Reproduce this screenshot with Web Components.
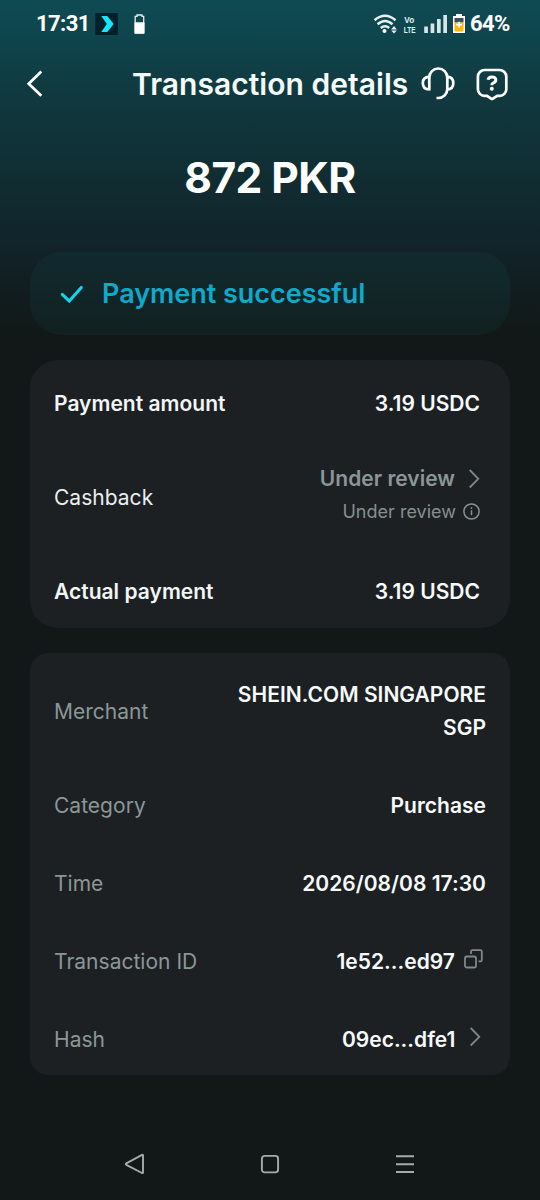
<!DOCTYPE html>
<html lang="en">
<head>
<meta charset="utf-8">
<title>Transaction details</title>
<style>
html,body{margin:0;padding:0;background:#121817}
body{width:540px;height:1200px;overflow:hidden;font-family:Inter,"Liberation Sans",sans-serif}
</style>
</head>
<body>
<payment-screen></payment-screen>
<script>
const define=(name,html)=>{
  const t=document.createElement('template');t.innerHTML=html;
  customElements.define(name,class extends HTMLElement{
    constructor(){super();this.attachShadow({mode:'open'}).append(t.content.cloneNode(true));}
  });
};

define('status-bar',`<style>
:host{display:flex;height:48px;box-sizing:border-box;padding:0 30px 0 36px;align-items:center;font:700 22px/48px Roboto,sans-serif;color:#fff}
svg{display:block;flex:none}
.time{width:59px;letter-spacing:-.6px}
.pct{width:40px;letter-spacing:-.6px;white-space:nowrap}
.sp{flex:1}
</style>
<span class="time">17:31</span>
<svg width="23" height="48" viewBox="95 0 23 48"><rect x="95.300" y="13" width="22.500" height="22" fill="#04202b"/><path d="M101.300 16h5.400q.6 0 1 .6l6 7.400-6 7.400q-.4.600-1 .600h-5.400l5.500-8z" fill="#16e6fb"/></svg>
<svg width="30" height="48" viewBox="118 0 30 48"><path d="M137 16.300v-1.300h5v1.300h1.700v16.500h-8.500V16.300z" fill="none" stroke="#e4f0f0" stroke-width="1.300"/><rect x="134.500" y="22.300" width="10" height="11.400" rx="1" fill="#fff"/></svg>
<span class="sp"></span>
<svg width="96" height="48" viewBox="374 0 96 48">
<g fill="none" stroke="#e6f1f2" stroke-width="2.500"><path d="M374.500 20.200Q385 11.300 395.500 20.200M377.600 24.300Q385 17.600 392.500 24.300M380.800 28Q385 24.500 389.200 28"/></g>
<circle cx="384.500" cy="31" r="2" fill="#fff"/><path d="M394 26l2.800 3.500h-5.600zM394 33.600l2.800-3.100h-5.600z" fill="#e6f1f2"/>
<g font-family="Liberation Sans" font-size="8" font-weight="700" fill="#e6f1f2"><text transform="translate(404.300 22.500) scale(1.050 1.150)" font-size="7.800">Vo</text><text transform="translate(403.700 32.500) scale(.82 1.150)">LTE</text></g>
<g fill="#d6e5e8"><rect x="424.200" y="26.500" width="3.700" height="6.500"/><rect x="430.600" y="23.500" width="3.700" height="9.500"/><rect x="437" y="19" width="3.700" height="14"/><rect x="443.300" y="15" width="3.700" height="18"/></g>
<path d="M456 14h6v2h3v17h-12V16h3z" fill="#fff"/><rect x="454.500" y="18" width="9" height="4.500" fill="#3c4c58"/><rect x="454.500" y="22.500" width="9" height="9" fill="#fdb60c"/><path d="M458.200 21.800h1.700v1.900h2.100v1.700h-2.100v2h-1.700v-2h-2.100v-1.700h2.100z" fill="#fff"/>
</svg>
<span class="pct">64%</span>`);

define('page-header',`<style>
:host{display:flex;height:72px;box-sizing:border-box;padding:0 30px 0 24px;align-items:center;color:#f5fbfb}
svg{display:block;flex:none}
h1{margin:0 0 0 82px;width:284px;font:600 30px/71px Inter,sans-serif;padding-top:1px;white-space:nowrap;letter-spacing:.03px}
</style>
<svg width="26" height="72" viewBox="24 48 26 72"><path d="M41.300 71.500 28.700 83.700l12.600 12" fill="none" stroke="#fff" stroke-width="2.700"/></svg>
<h1><slot></slot></h1>
<svg width="94" height="72" viewBox="416 48 94 72" fill="none" stroke="#fff" stroke-width="2.700">
<path d="M429.300 90.500V77.500a9 9 0 0 1 18 0V89a9 9 0 0 1-9 9h-1.800M429.300 76.700q-6.500.6-6.500 6.300 0 6.500 6.500 6.500M447.300 76.700q6 .6 6 6.300 0 6.200-6 6.600"/>
<path d="M484.500 70h15.200a6.600 6.600 0 0 1 6.600 6.600v12.600a6.600 6.600 0 0 1-6.600 6.600h-2.500l-4.700 3.100q-.5.300-1 0l-4.500-3.100h-2.500a6.600 6.600 0 0 1-6.600-6.600V76.600a6.600 6.600 0 0 1 6.600-6.600z"/>
<path d="M488 79.800q.6-2.900 3.900-2.900c5 0 4.800 4.700 1.500 5.900q-1.600.6-1.600 2.400" stroke-width="3"/><circle cx="491.800" cy="88.800" r="2" fill="#fff" stroke="none"/>
</svg>`);

define('success-banner',`<style>
:host{display:flex;box-sizing:border-box;height:83px;margin:0 30px;padding:1px 30px 0;align-items:center;border-radius:32px;background:linear-gradient(#112a2f,#112628 45%,#12201f);font:600 27px/34px Inter,sans-serif;letter-spacing:-.03px;color:#0ea9cb}
svg{display:block;margin-right:18px;flex:none}span{white-space:nowrap}
</style>
<svg width="24" height="34" viewBox="60 277 24 34"><path d="M62.300 294.300 69.300 301l12-13.600" fill="none" stroke="#13d5ef" stroke-width="3" stroke-linecap="round"/></svg>
<span><slot></slot></span>`);

define('info-card',`<style>
:host{display:flex;flex-direction:column;box-sizing:border-box;margin:0 30px;background:#1c2023;border-radius:var(--radius,28px);padding:var(--pad)}
</style><slot></slot>`);

define('detail-row',`<style>
:host{display:flex;justify-content:space-between;align-items:center;font:400 21px/33px Inter,sans-serif;letter-spacing:.02px;color:#8b9797}
.label{white-space:nowrap}
.value{display:flex;flex-direction:column;align-items:flex-end;text-align:right;font-weight:600;color:#f7fafa;white-space:nowrap}
:host([strong]) .label{font-weight:600;color:#f1f5f5}
:host([bright]) .label{color:#e9eeee;padding-top:4px}
</style><span class="label"><slot name="label"></slot></span><span class="value"><slot></slot></span>`);

define('value-line',`<style>
:host{display:flex;align-items:center;height:33px;color:var(--line-color,inherit);font:var(--line-font,inherit)}
</style><slot></slot>`);

define('chevron-icon',`<style>:host{display:block;margin-left:13px;margin-right:var(--mr,0);margin-top:var(--mt,0)}svg{display:block}</style>
<svg width="12" height="20" viewBox="0 0 12 20"><path d="M1.700 1l8.600 8.800-8.600 8.700" fill="none" stroke="#7d8989" stroke-width="1.800"/></svg>`);
define('info-icon',`<style>:host{display:block;margin-left:7px}svg{display:block}</style>
<svg width="17" height="17" viewBox="0 0 17 17"><circle cx="8.500" cy="8.500" r="7.600" fill="none" stroke="#859191" stroke-width="1.500"/><path d="M8.500 7.300v5M8.500 4.300v1.700" stroke="#859191" stroke-width="1.500"/></svg>`);
define('copy-icon',`<style>:host{display:block;margin:-5px 3px 0 9px}svg{display:block}</style>
<svg width="19" height="20" viewBox="0 0 19 20" fill="none" stroke="#7d8989" stroke-width="1.800"><rect x="1" y="7.500" width="11" height="11" rx="1.800"/><path d="M7 5V2.500a1.300 1.300 0 0 1 1.300-1.300h8.200a1.300 1.300 0 0 1 1.300 1.300v8.500a1.300 1.300 0 0 1-1.300 1.300H14.500"/></svg>`);

define('nav-bar',`<style>
:host{display:grid;grid-template-columns:repeat(3,135px);justify-content:center;height:72px;align-items:center;justify-items:center}
svg{display:block}
</style>
<svg width="24" height="24" viewBox="0 0 24 24" fill="none" stroke="#a6abaa" stroke-width="1.900" stroke-linejoin="round"><path d="M3.300 11.300 19 2.900q1-.4 1 .7v16.800q0 1-1 .6L3.300 12.800q-1.100-.8 0-1.500z"/></svg>
<svg width="24" height="24" viewBox="0 0 24 24" fill="none" stroke="#a6abaa" stroke-width="1.900"><rect x="3.900" y="3.900" width="16.200" height="16.500" rx="2.800"/></svg>
<svg width="24" height="24" viewBox="0 0 24 24" fill="none" stroke="#a6abaa" stroke-width="2"><path d="M3 4.200h18M3 12.200h18M3 20h18"/></svg>`);

define('payment-screen',`<style>
:host{display:flex;flex-direction:column;width:540px;height:1200px;background:linear-gradient(#0f4a53 0,#0f464e 30px,#103a40 90px,#10343a 130px,#112c31 185px,#11242a 245px,#121e21 280px,#121817 335px)}
.amount{margin:30px 0 0;height:57px;text-align:center;font:700 42.500px/56px Inter,sans-serif;letter-spacing:-.55px;color:#fff}
success-banner{margin-top:45px}
info-card{margin-top:25px}
.pay{--radius:28px;--pad:27px 30px 21px 24px;height:268px}
.more{--radius:18px;--pad:25px 24px 19px;height:422px;gap:45px;margin-top:25px}
.pay{justify-content:flex-start}
.cash{margin:42px 0 47px}
.muted{--line-color:#8b9797}
.small{--line-color:#849090;--line-font:400 18px/33px Inter,sans-serif}
nav-bar{margin-top:53px}
</style>
<status-bar></status-bar>
<page-header>Transaction details</page-header>
<div class="amount">872 PKR</div>
<success-banner>Payment successful</success-banner>
<info-card class="pay">
<detail-row strong><span slot="label">Payment amount</span>3.19 USDC</detail-row>
<detail-row bright class="cash"><span slot="label">Cashback</span><value-line class="muted">Under review<chevron-icon></chevron-icon></value-line><value-line class="small">Under review<info-icon></info-icon></value-line></detail-row>
<detail-row strong><span slot="label">Actual payment</span>3.19 USDC</detail-row>
</info-card>
<info-card class="more">
<detail-row><span slot="label">Merchant</span><value-line>SHEIN.COM SINGAPORE</value-line><value-line>SGP</value-line></detail-row>
<detail-row><span slot="label">Category</span>Purchase</detail-row>
<detail-row><span slot="label">Time</span>2026/08/08 17:30</detail-row>
<detail-row><span slot="label">Transaction ID</span><value-line>1e52...ed97<copy-icon></copy-icon></value-line></detail-row>
<detail-row><span slot="label">Hash</span><value-line>09ec...dfe1<chevron-icon style="--mr:5.500px;--mt:-5px"></chevron-icon></value-line></detail-row>
</info-card>
<nav-bar></nav-bar>`);
</script>
</body>
</html>
